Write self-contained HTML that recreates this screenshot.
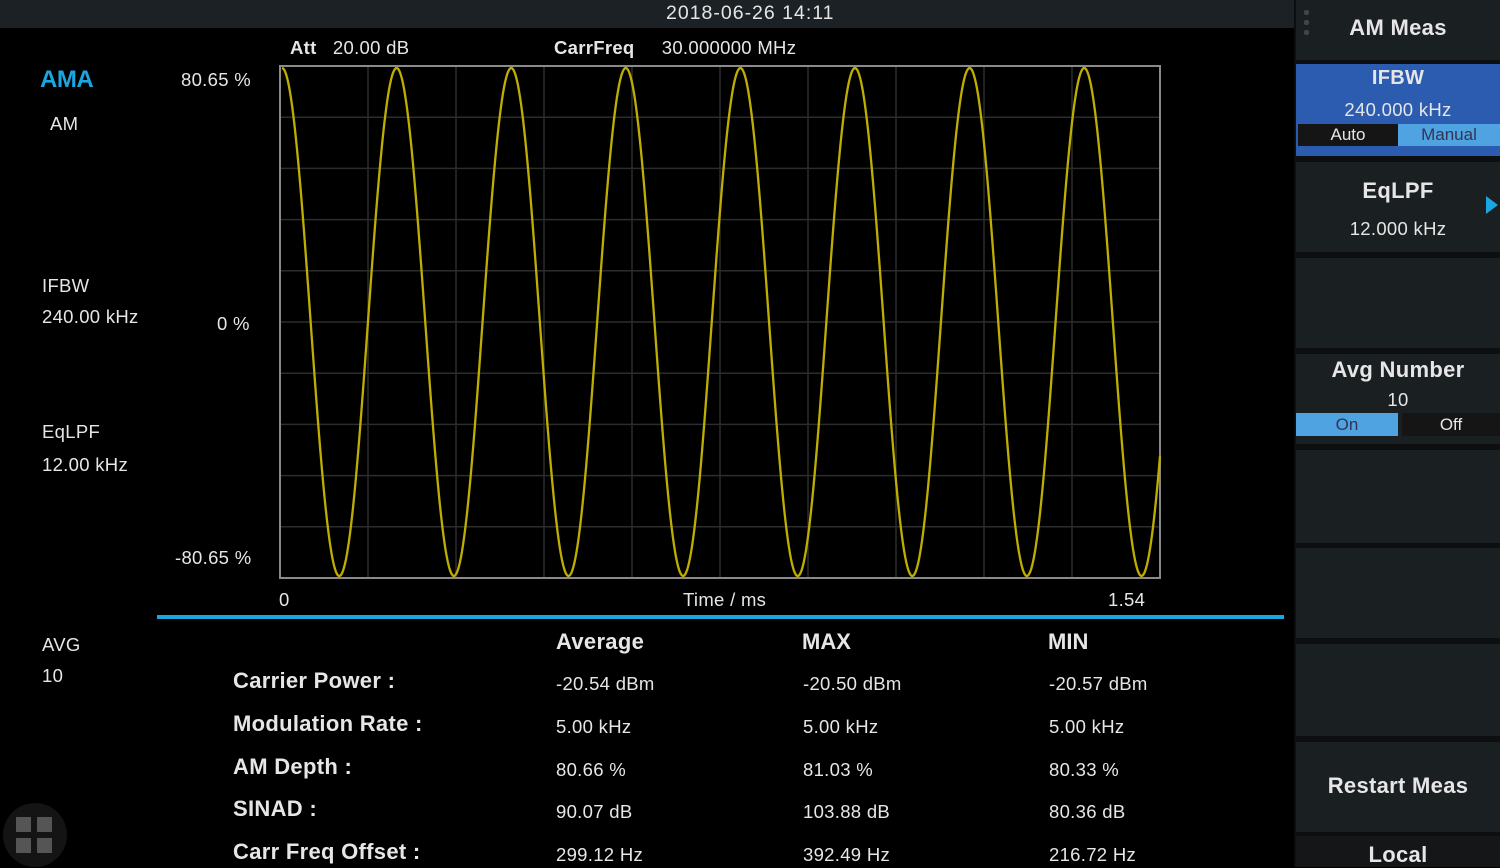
<!DOCTYPE html>
<html><head><meta charset="utf-8"><style>
*{margin:0;padding:0;box-sizing:border-box}
body{width:1500px;height:867px;background:#000;position:relative;overflow:hidden;font-family:"Liberation Sans",sans-serif;color:#e6e6e6}
.a{position:absolute;white-space:nowrap}
.s{font-size:18.5px;letter-spacing:0.3px}
.b{font-size:22px;font-weight:bold;letter-spacing:0.3px}
.btn{position:absolute;left:1296px;width:204px;background:#1a1f22}
.c{text-align:center;width:204px;left:0}
</style></head><body>
<div class="a" style="left:0;top:0;width:1294px;height:28px;background:#1b2125"></div>
<div class="a s" style="left:666px;top:2px;font-size:19.5px;letter-spacing:1px">2018-06-26 14:11</div>

<div class="a" style="left:40px;top:66px;font-size:24px;font-weight:bold;color:#1aa6e0;letter-spacing:-0.5px">AMA</div>
<div class="a s" style="left:50px;top:113px">AM</div>
<div class="a s" style="left:42px;top:275px">IFBW</div>
<div class="a s" style="left:42px;top:306px">240.00 kHz</div>
<div class="a s" style="left:42px;top:421px">EqLPF</div>
<div class="a s" style="left:42px;top:454px">12.00 kHz</div>
<div class="a s" style="left:42px;top:634px">AVG</div>
<div class="a s" style="left:42px;top:665px">10</div>

<div class="a s" style="left:181px;top:69px">80.65 %</div>
<div class="a s" style="left:217px;top:313px">0 %</div>
<div class="a s" style="left:175px;top:547px">-80.65 %</div>
<div class="a s" style="left:290px;top:37px"><b>Att</b>&nbsp;&nbsp;&nbsp;20.00 dB</div>
<div class="a s" style="left:554px;top:37px"><b>CarrFreq</b>&nbsp;&nbsp;&nbsp;&nbsp;&nbsp;30.000000 MHz</div>
<div class="a s" style="left:279px;top:589px">0</div>
<div class="a s" style="left:683px;top:589px">Time / ms</div>
<div class="a s" style="left:1108px;top:589px">1.54</div>

<svg class="a" style="left:0;top:0" width="1294" height="867">
<g stroke="#2c2c2c" stroke-width="1.5" id="g"></g>
<rect x="280" y="66" width="880" height="512" fill="none" stroke="#8a8a8a" stroke-width="2"/>
<path id="w" fill="none" stroke="#bfae00" stroke-width="2.3"/>
<rect x="157" y="615" width="1127" height="4" fill="#1aa6e0"/>
<circle cx="35" cy="835" r="32" fill="#141414"/>
<g fill="#555"><rect x="16" y="817" width="15" height="15"/><rect x="37" y="817" width="15" height="15"/><rect x="16" y="838" width="15" height="15"/><rect x="37" y="838" width="15" height="15"/></g>
</svg>
<script>
var g=document.getElementById('g'),h='';
for(var i=1;i<10;i++){var x=280+88*i;h+='<line x1="'+x+'" y1="66" x2="'+x+'" y2="578"/>';var y=66+51.2*i;h+='<line x1="280" y1="'+y+'" x2="1160" y2="'+y+'"/>';}
g.innerHTML=h;
var d='';for(var x=282;x<=1160;x+=1){var y=322-254*Math.cos(2*Math.PI*(x-282)/114.6);d+=(x==282?'M':'L')+x+' '+y.toFixed(1);}
document.getElementById('w').setAttribute('d',d);
</script>

<div class="a" style="left:556px;top:629px;font-size:22px;font-weight:bold;letter-spacing:0.3px">Average</div>
<div class="a" style="left:802px;top:629px;font-size:22px;font-weight:bold">MAX</div>
<div class="a" style="left:1048px;top:629px;font-size:22px;font-weight:bold">MIN</div>
<div class="a b" style="left:233px;top:668px">Carrier Power :</div>
<div class="a b" style="left:233px;top:711px">Modulation Rate :</div>
<div class="a b" style="left:233px;top:754px">AM Depth :</div>
<div class="a b" style="left:233px;top:796px">SINAD :</div>
<div class="a b" style="left:233px;top:839px">Carr Freq Offset :</div>
<div class="a s" style="left:556px;top:673px">-20.54 dBm</div>
<div class="a s" style="left:556px;top:716px">5.00 kHz</div>
<div class="a s" style="left:556px;top:759px">80.66 %</div>
<div class="a s" style="left:556px;top:801px">90.07 dB</div>
<div class="a s" style="left:556px;top:844px">299.12 Hz</div>
<div class="a s" style="left:803px;top:673px">-20.50 dBm</div>
<div class="a s" style="left:803px;top:716px">5.00 kHz</div>
<div class="a s" style="left:803px;top:759px">81.03 %</div>
<div class="a s" style="left:803px;top:801px">103.88 dB</div>
<div class="a s" style="left:803px;top:844px">392.49 Hz</div>
<div class="a s" style="left:1049px;top:673px">-20.57 dBm</div>
<div class="a s" style="left:1049px;top:716px">5.00 kHz</div>
<div class="a s" style="left:1049px;top:759px">80.33 %</div>
<div class="a s" style="left:1049px;top:801px">80.36 dB</div>
<div class="a s" style="left:1049px;top:844px">216.72 Hz</div>

<!-- right panel -->
<div class="a" style="left:1294px;top:0;width:206px;height:867px;background:#0c0e10"></div>
<div class="btn" style="top:0;height:60px"><div class="a c b" style="top:15px">AM Meas</div>
<div class="a" style="left:8px;top:10px;width:5px;height:5px;background:#444;box-shadow:0 10px #444,0 20px #444;border-radius:2px"></div></div>
<div class="btn" style="top:64px;height:92px;background:#2b5cb0"><div class="a c b" style="top:3px;font-size:20px">IFBW</div>
<div class="a c s" style="top:35px">240.000 kHz</div>
<div class="a" style="left:2px;top:60px;width:100px;height:22px;background:#151515;font-size:17px;text-align:center;line-height:22px">Auto</div>
<div class="a" style="left:102px;top:60px;width:102px;height:22px;background:#4ea3e0;color:#335;font-size:17px;text-align:center;line-height:22px">Manual</div></div>
<div class="btn" style="top:162px;height:90px"><div class="a c b" style="top:16px">EqLPF</div>
<div class="a c s" style="top:56px">12.000 kHz</div>
<div class="a" style="left:190px;top:34px;width:0;height:0;border-top:9px solid transparent;border-bottom:9px solid transparent;border-left:12px solid #1aa6e0"></div></div>
<div class="btn" style="top:258px;height:90px"></div>
<div class="btn" style="top:354px;height:90px"><div class="a c b" style="top:3px">Avg Number</div>
<div class="a c s" style="top:35px">10</div>
<div class="a" style="left:0;top:59px;width:102px;height:23px;background:#4ea3e0;color:#335;font-size:17px;text-align:center;line-height:23px">On</div>
<div class="a" style="left:106px;top:59px;width:98px;height:23px;background:#151515;font-size:17px;text-align:center;line-height:23px">Off</div></div>
<div class="btn" style="top:450px;height:93px"></div>
<div class="btn" style="top:548px;height:90px"></div>
<div class="btn" style="top:644px;height:92px"></div>
<div class="btn" style="top:742px;height:90px"><div class="a c b" style="top:31px">Restart Meas</div></div>
<div class="btn" style="top:836px;height:31px;background:#141618"><div class="a c b" style="top:6px">Local</div></div>
</body></html>
